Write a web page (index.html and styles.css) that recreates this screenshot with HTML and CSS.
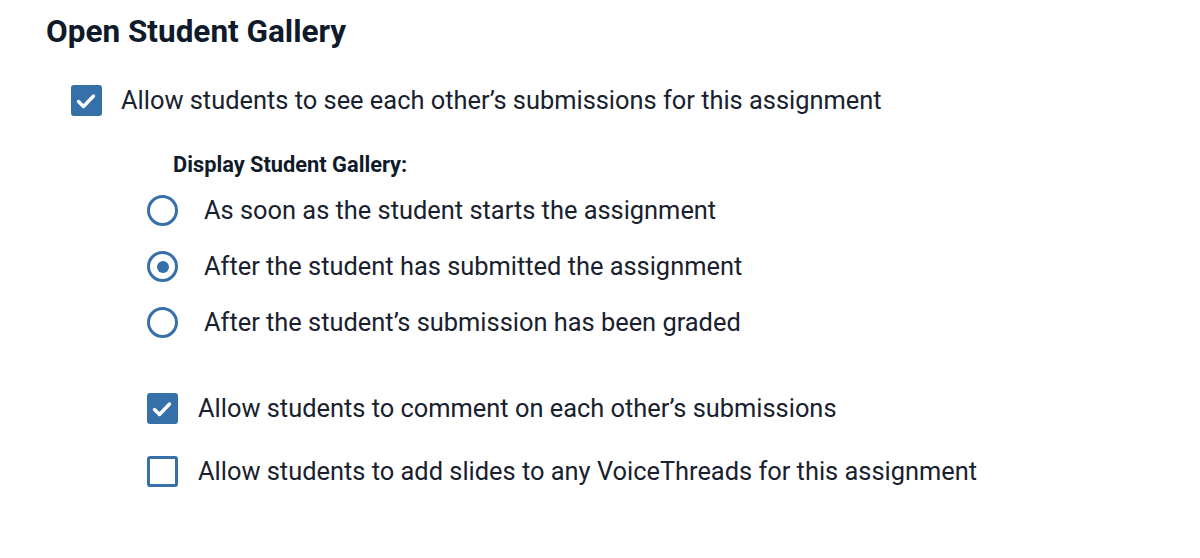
FILE: index.html
```html
<!DOCTYPE html>
<html lang="en">
<head>
<meta charset="utf-8">
<title>Open Student Gallery</title>
<link rel="stylesheet" href="styles.css">
</head>
<body>
<div class="page">
  <h1 class="title">Open Student Gallery</h1>

  <div class="row row-main">
    <span class="box checked">
      <svg viewBox="0 0 31 31" width="31" height="31"><polyline points="7.5,16.5 12.5,21.5 22.5,11" fill="none" stroke="#fff" stroke-width="3.4" stroke-linecap="round" stroke-linejoin="round"/></svg>
    </span>
    <span class="label">Allow students to see each other’s submissions for this assignment</span>
  </div>

  <div class="sub">
    <div class="sub-title">Display Student Gallery:</div>
    <div class="radios">
      <div class="row radio-row">
        <span class="radio"></span>
        <span class="label">As soon as the student starts the assignment</span>
      </div>
      <div class="row radio-row">
        <span class="radio on"></span>
        <span class="label">After the student has submitted the assignment</span>
      </div>
      <div class="row radio-row">
        <span class="radio"></span>
        <span class="label">After the student’s submission has been graded</span>
      </div>
    </div>

    <div class="checks">
      <div class="row check-row">
        <span class="box checked">
          <svg viewBox="0 0 31 31" width="31" height="31"><polyline points="7.5,16.5 12.5,21.5 22.5,11" fill="none" stroke="#fff" stroke-width="3.4" stroke-linecap="round" stroke-linejoin="round"/></svg>
        </span>
        <span class="label">Allow students to comment on each other’s submissions</span>
      </div>
      <div class="row check-row">
        <span class="box"></span>
        <span class="label">Allow students to add slides to any VoiceThreads for this assignment</span>
      </div>
    </div>
  </div>
</div>
</body>
</html>
```
FILE: styles.css
```css
html, body {
  margin: 0;
  padding: 0;
  background: #ffffff;
}
body {
  font-family: Roboto, "Liberation Sans", sans-serif;
  color: #18212d;
}
.page {
  padding: 12px 0 0 46px;
}
.title {
  margin: 0;
  font-size: 31.5px;
  line-height: 40px;
  font-weight: 700;
  color: #0f1b2a;
}
.row {
  display: flex;
  align-items: center;
  height: 31px;
}
.label {
  font-size: 25.4px;
  line-height: 31px;
  white-space: nowrap;
}
.row-main {
  margin-top: 33px;
  padding-left: 25px;
  gap: 19px;
}
.box {
  box-sizing: border-box;
  width: 31px;
  height: 31px;
  flex: none;
  border: 3px solid #3670a9;
  border-radius: 3px;
  background: #fff;
  display: flex;
  align-items: center;
  justify-content: center;
}
.box.checked {
  background: #3670a9;
  border: none;
}
.box svg {
  display: block;
}
.sub {
  padding-left: 101px;
}
.sub-title {
  margin-top: 37px;
  padding-left: 26px;
  font-size: 21.8px;
  line-height: 24px;
  font-weight: 700;
  color: #0f1b2a;
}
.radios {
  margin-top: 18px;
  display: flex;
  flex-direction: column;
  gap: 25px;
}
.radio-row {
  gap: 26px;
}
.radio {
  box-sizing: border-box;
  width: 31px;
  height: 31px;
  flex: none;
  border: 3.5px solid #3670a9;
  border-radius: 50%;
  display: flex;
  align-items: center;
  justify-content: center;
}
.radio.on::after {
  content: "";
  width: 12px;
  height: 12px;
  border-radius: 50%;
  background: #3670a9;
}
.checks {
  margin-top: 55px;
  display: flex;
  flex-direction: column;
  gap: 32px;
}
.check-row {
  gap: 20px;
}
```
